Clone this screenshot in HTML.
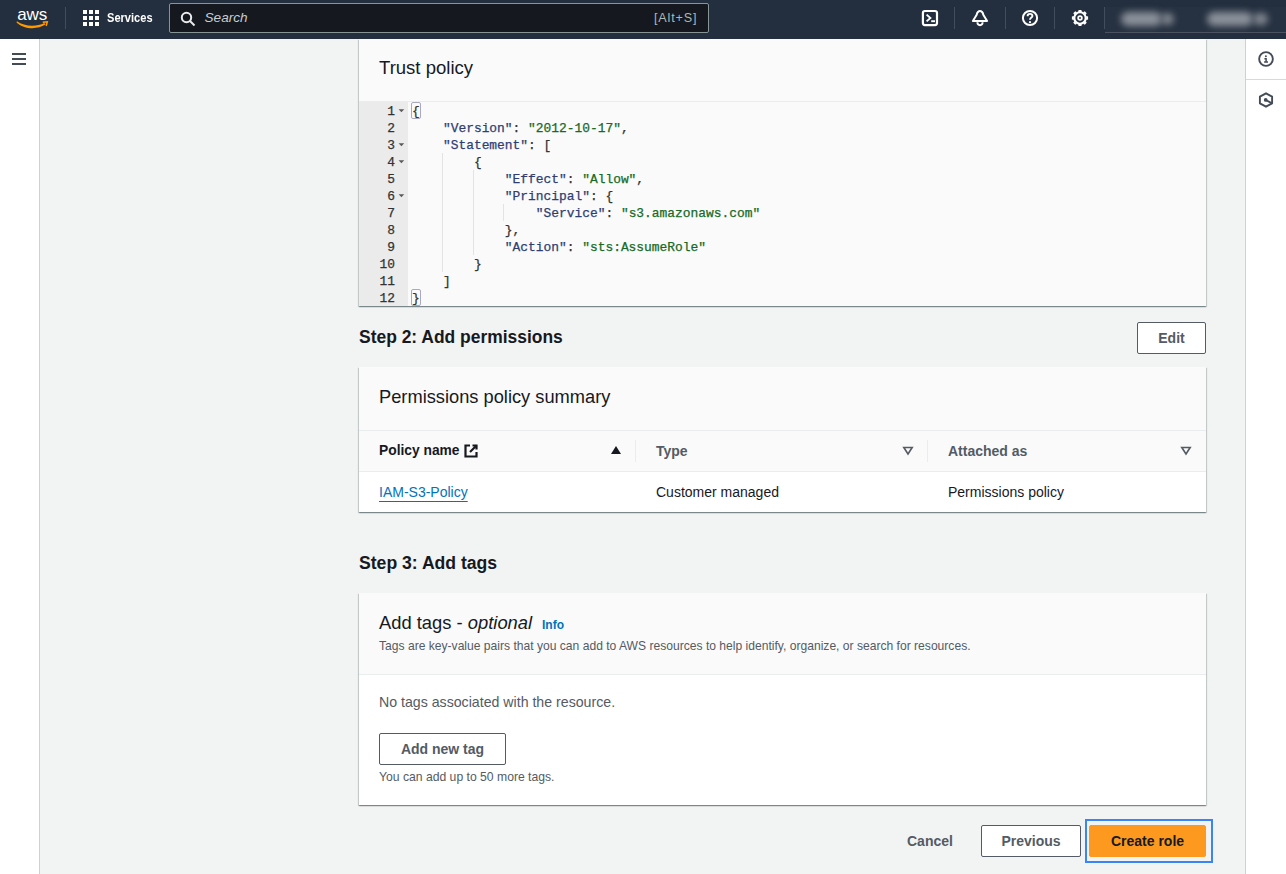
<!DOCTYPE html>
<html><head><meta charset="utf-8">
<style>
*{box-sizing:border-box;margin:0;padding:0}
html,body{width:1286px;height:874px;overflow:hidden;background:#f2f3f3;font-family:"Liberation Sans",sans-serif;color:#16191f}
.abs{position:absolute}
#nav{position:absolute;left:0;top:0;width:1286px;height:39px;background:#232f3e}
#side{position:absolute;left:0;top:39px;width:40px;height:835px;background:#fff;border-right:1px solid #ccd2d2}
#tools{position:absolute;left:1245px;top:39px;width:41px;height:835px;background:#fff;border-left:1px solid #ccd2d2}
.card{position:absolute;left:359px;width:847px;background:#fff;box-shadow:0 1px 1px 0 rgba(0,28,36,.3),1px 1px 1px 0 rgba(0,28,36,.15),-1px 1px 1px 0 rgba(0,28,36,.15)}
.hd{position:absolute;left:0;top:0;width:100%;background:#fafafa;border-bottom:1px solid #eaeded}
.t{position:absolute;white-space:nowrap;line-height:1}
.h2{font-size:18px;font-weight:400;color:#16191f}
.h1{font-size:18px;font-weight:700;color:#16191f}
.btn{position:absolute;border:1px solid #545b64;border-radius:2px;background:#fff;color:#545b64;font-weight:700;font-size:14px;text-align:center}
.mono{font-family:"Liberation Mono",monospace;font-size:12.9px;-webkit-text-stroke:0.25px currentColor}
.ln{position:absolute;left:0;width:36px;padding-top:1px;text-align:right;color:#333;height:18px;line-height:17px}
.cl{position:absolute;left:53px;padding-top:1px;height:18px;line-height:17px;white-space:pre;color:#333}
.k{color:#2f3e72}.v{color:#176a25}
</style></head><body>
<div id="nav">
  <!-- aws logo -->
  <div class="t" style="left:17.300px;top:5.900px;font-size:17px;color:#fff;letter-spacing:-0.2px">aws</div>
  <svg class="abs" style="left:14px;top:18px" width="40" height="12" viewBox="14 18 40 12"><path d="M17 21.200C24 26.300 36 27.200 44.400 22.900L45.400 24.600C37 30.100 23.500 29.200 16.500 22.400Z" fill="#f90"/><path d="M42.600 21.500L48.300 20.900L46.900 26.300L45.500 25.600L46.200 22.800L42.900 23Z" fill="#f90"/></svg>
  <div class="abs" style="left:65px;top:7px;width:1px;height:22px;background:#414d5c"></div>
  <svg class="abs" style="left:83px;top:10px" width="16" height="16" viewBox="0 0 16 16" fill="#fff"><rect x="0" y="0" width="4" height="4"/><rect x="6" y="0" width="4" height="4"/><rect x="12" y="0" width="4" height="4"/><rect x="0" y="6" width="4" height="4"/><rect x="6" y="6" width="4" height="4"/><rect x="12" y="6" width="4" height="4"/><rect x="0" y="12" width="4" height="4"/><rect x="6" y="12" width="4" height="4"/><rect x="12" y="12" width="4" height="4"/></svg>
  <div class="t" style="left:107px;top:11px;font-size:13.5px;color:#fff;font-weight:700;transform-origin:0 0;transform:scaleX(0.82)">Services</div>
  <div class="abs" style="left:169px;top:3px;width:540px;height:30px;background:#15191f;border:1px solid #879596;border-radius:2px"></div>
  <svg class="abs" style="left:179px;top:10px" width="18" height="18" viewBox="0 0 18 18"><circle cx="7.5" cy="7.5" r="4.7" stroke="#e9ebed" stroke-width="2" fill="none"/><path d="M11 11 L15.5 15.5" stroke="#e9ebed" stroke-width="2"/></svg>
  <div class="t" style="left:204.500px;top:11px;font-size:13.600px;color:#c6cdd3;font-style:italic">Search</div>
  <div class="t" style="left:654px;top:12px;font-size:12.600px;letter-spacing:0.850px;color:#aab7b8">[Alt+S]</div>

  <svg class="abs" style="left:900px;top:0" width="200" height="39" viewBox="900 0 200 39" fill="none" stroke="#fff">
    <rect x="922.9" y="11" width="14.1" height="14.1" rx="2" stroke-width="2.2"/>
    <path d="M926.6 14.6L930.4 18L926.6 21.4" stroke-width="1.9"/><path d="M931.2 21.2H935" stroke-width="1.9"/>
    <path d="M972.9 21L976.700 14.800C976.900 12.600 978.700 10.900 980 10.900C981.300 10.900 983.100 12.600 983.300 14.800L987.100 21Z" stroke-width="2" stroke-linejoin="round"/>
    <path d="M977.4 22.3A2.600 2.900 0 0 0 982.600 22.3" stroke-width="1.9"/>
    <circle cx="1030" cy="18" r="7.100" stroke-width="2"/>
    <path d="M1027.6 16.2C1027.6 14.600 1028.700 13.900 1030 13.900C1031.300 13.900 1032.400 14.700 1032.400 15.900C1032.400 17.500 1030 17.700 1030 19.800" stroke-width="1.9"/>
    <circle cx="1030" cy="22.200" r="1.100" fill="#fff" stroke="none"/>
    <circle cx="1080" cy="18" r="5.700" stroke-width="2.100"/>
    <g fill="#fff" stroke="none"><path d="M1078.1 11.900L1078.600 9.900H1081.400L1081.900 11.900Z" transform="rotate(0 1080 18)"/><path d="M1078.1 11.900L1078.600 9.900H1081.400L1081.900 11.900Z" transform="rotate(45 1080 18)"/><path d="M1078.1 11.900L1078.600 9.900H1081.400L1081.900 11.900Z" transform="rotate(90 1080 18)"/><path d="M1078.1 11.900L1078.600 9.900H1081.400L1081.900 11.900Z" transform="rotate(135 1080 18)"/><path d="M1078.1 11.900L1078.600 9.900H1081.400L1081.900 11.900Z" transform="rotate(180 1080 18)"/><path d="M1078.1 11.900L1078.600 9.900H1081.400L1081.900 11.900Z" transform="rotate(225 1080 18)"/><path d="M1078.1 11.900L1078.600 9.900H1081.400L1081.900 11.900Z" transform="rotate(270 1080 18)"/><path d="M1078.1 11.900L1078.600 9.900H1081.400L1081.900 11.900Z" transform="rotate(315 1080 18)"/></g>
    <circle cx="1080" cy="18" r="1.850" stroke-width="1.800"/>
  </svg>
  <div class="abs" style="left:954px;top:7px;width:1px;height:22px;background:#414d5c"></div>
  <div class="abs" style="left:1005px;top:7px;width:1px;height:22px;background:#414d5c"></div>
  <div class="abs" style="left:1054px;top:7px;width:1px;height:22px;background:#414d5c"></div>
  <div class="abs" style="left:1104px;top:7px;width:1px;height:22px;background:#414d5c"></div>
  <div class="abs" style="left:1105px;top:7px;width:181px;height:26px;background:#263141;border-bottom:1px solid #4a535f"></div>
  <div class="abs" style="left:1121px;top:12px;width:41px;height:14px;border-radius:7px;background:#8a9099;filter:blur(3.500px)"></div>
  <div class="abs" style="left:1161px;top:13px;width:13px;height:12px;border-radius:6px;background:#7f868f;filter:blur(3.500px)"></div>
  <div class="abs" style="left:1207px;top:12px;width:46px;height:14px;border-radius:7px;background:#8a9099;filter:blur(3.500px)"></div>
  <div class="abs" style="left:1253px;top:13px;width:15px;height:12px;border-radius:6px;background:#7f868f;filter:blur(3.500px)"></div>
</div>
<div id="side"></div>
<div id="tools"></div>

<!-- Trust policy card -->
<div class="card" style="top:39px;height:267px">
  <div class="hd" style="height:63px"></div>
  <div class="t h2" style="left:20px;top:20px;font-size:18.55px">Trust policy</div>
  <div class="abs mono" style="left:0;top:63px;width:847px;height:204px;background:#fafafa">
    <div class="abs" style="left:0;top:0;width:49px;height:204px;background:#ebebeb"></div>
    <div class="abs" style="left:0;top:0px;width:847px;height:204px">
    <div class="ln" style="top:0px">1</div>
    <svg class="abs" style="left:39px;top:7px" width="7" height="4" viewBox="0 0 7 4"><path d="M0.600 0.300H6.200L3.400 3.200Z" fill="#5a5a5a"/></svg>
    <div class="cl" style="top:0px">{</div>
    <div class="ln" style="top:17px">2</div>
    <div class="cl" style="top:17px">    <span class="k">"Version"</span>: <span class="v">"2012-10-17"</span>,</div>
    <div class="ln" style="top:34px">3</div>
    <svg class="abs" style="left:39px;top:41px" width="7" height="4" viewBox="0 0 7 4"><path d="M0.600 0.300H6.200L3.400 3.200Z" fill="#5a5a5a"/></svg>
    <div class="cl" style="top:34px">    <span class="k">"Statement"</span>: [</div>
    <div class="ln" style="top:51px">4</div>
    <svg class="abs" style="left:39px;top:58px" width="7" height="4" viewBox="0 0 7 4"><path d="M0.600 0.300H6.200L3.400 3.200Z" fill="#5a5a5a"/></svg>
    <div class="cl" style="top:51px">        {</div>
    <div class="ln" style="top:68px">5</div>
    <div class="cl" style="top:68px">            <span class="k">"Effect"</span>: <span class="v">"Allow"</span>,</div>
    <div class="ln" style="top:85px">6</div>
    <svg class="abs" style="left:39px;top:92px" width="7" height="4" viewBox="0 0 7 4"><path d="M0.600 0.300H6.200L3.400 3.200Z" fill="#5a5a5a"/></svg>
    <div class="cl" style="top:85px">            <span class="k">"Principal"</span>: {</div>
    <div class="ln" style="top:102px">7</div>
    <div class="cl" style="top:102px">                <span class="k">"Service"</span>: <span class="v">"s3.amazonaws.com"</span></div>
    <div class="ln" style="top:119px">8</div>
    <div class="cl" style="top:119px">            },</div>
    <div class="ln" style="top:136px">9</div>
    <div class="cl" style="top:136px">            <span class="k">"Action"</span>: <span class="v">"sts:AssumeRole"</span></div>
    <div class="ln" style="top:153px">10</div>
    <div class="cl" style="top:153px">        }</div>
    <div class="ln" style="top:170px">11</div>
    <div class="cl" style="top:170px">    ]</div>
    <div class="ln" style="top:187px">12</div>
    <div class="cl" style="top:187px">}</div>
    <div class="abs" style="left:83px;top:51px;width:1px;height:119px;background:#e3e3e3"></div>
    <div class="abs" style="left:114px;top:68px;width:1px;height:85px;background:#e3e3e3"></div>
    <div class="abs" style="left:144px;top:102px;width:1px;height:17px;background:#e3e3e3"></div>
    <div class="abs" style="left:52px;top:0px;width:10px;height:17px;border:1px solid #a9a9c4;border-radius:2px"></div>
    <div class="abs" style="left:52px;top:187px;width:10px;height:17px;border:1px solid #a9a9c4;border-radius:2px"></div>
    </div>
  </div>
</div>

<div class="t h1" style="left:359px;top:329px;font-size:17.45px">Step 2: Add permissions</div>
<div class="btn" style="left:1137px;top:322px;width:69px;height:32px;line-height:30px">Edit</div>

<div class="card" style="top:367px;height:145px">
  <div class="hd" style="height:64px"></div>
  <div class="t h2" style="left:20px;top:21px;font-size:18.27px">Permissions policy summary</div>
  <div class="abs" style="left:0;top:64px;width:847px;height:41px;background:#fafafa;border-bottom:1px solid #eaeded"></div>
  <div class="t" style="left:20px;top:76.600px;font-size:13.800px;font-weight:700;color:#16191f">Policy name</div>
  <svg class="abs" style="left:104px;top:76px" width="16" height="16" viewBox="0 0 16 16" fill="none" stroke="#16191f" stroke-width="2.200"><path d="M7 2.5H2.5V13.5H13.5V9"/><path d="M9.5 2.5H13.5V6.5"/><path d="M13.5 2.5L7 9"/></svg>
  <svg class="abs" style="left:251px;top:78px" width="12" height="10" viewBox="0 0 12 10"><path d="M6 1L11 9H1Z" fill="#16191f"/></svg>
  <div class="abs" style="left:276px;top:73px;width:1px;height:22px;background:#eaeded"></div>
  <div class="t" style="left:297px;top:77px;font-size:14px;font-weight:700;color:#545b64">Type</div>
  <svg class="abs" style="left:543px;top:79px" width="12" height="10" viewBox="0 0 12 10"><path d="M1.8 1.5H10.2L6 8Z" fill="none" stroke="#545b64" stroke-width="1.6" stroke-linejoin="miter"/></svg>
  <div class="abs" style="left:568px;top:73px;width:1px;height:22px;background:#eaeded"></div>
  <div class="t" style="left:589px;top:77px;font-size:14px;font-weight:700;color:#545b64">Attached as</div>
  <svg class="abs" style="left:821px;top:79px" width="12" height="10" viewBox="0 0 12 10"><path d="M1.8 1.5H10.2L6 8Z" fill="none" stroke="#545b64" stroke-width="1.6" stroke-linejoin="miter"/></svg>
  <div class="t" style="left:20px;top:118px;font-size:14px;color:#0073bb;text-decoration:underline;text-underline-offset:4px">IAM-S3-Policy</div>
  <div class="t" style="left:297px;top:118px;font-size:14px;color:#16191f">Customer managed</div>
  <div class="t" style="left:589px;top:118px;font-size:14px;color:#16191f">Permissions policy</div>

</div>

<div class="t h1" style="left:359px;top:555px;font-size:17.6px">Step 3: Add tags</div>

<div class="card" style="top:593px;height:212px">
  <div class="hd" style="height:82px"></div>
  <div class="t h2" style="left:20px;top:21px;font-size:18.36px">Add tags - <i>optional</i></div>
  <div class="t" style="left:183px;top:26px;font-size:12px;font-weight:700;color:#0073bb">Info</div>
  <div class="t" style="left:20px;top:47px;font-size:12.1px;color:#545b64">Tags are key-value pairs that you can add to AWS resources to help identify, organize, or search for resources.</div>
  <div class="t" style="left:20px;top:102px;font-size:14.17px;color:#545b64">No tags associated with the resource.</div>
  <div class="btn" style="left:20px;top:140px;width:127px;height:32px;line-height:30px">Add new tag</div>
  <div class="t" style="left:20px;top:178px;font-size:12.18px;color:#545b64">You can add up to 50 more tags.</div>

</div>


<div class="t" style="left:907px;top:834px;font-size:14px;font-weight:700;color:#545b64">Cancel</div>
<div class="btn" style="left:981px;top:825px;width:100px;height:32px;line-height:30px">Previous</div>
<div class="abs" style="left:1085px;top:819px;width:128px;height:44px;border:2px solid #3a84f7"></div>
<div class="btn" style="left:1089px;top:825px;width:117px;height:32px;line-height:30px;background:#fd991f;border-color:#fd991f;color:#16191f">Create role</div>

<svg class="abs" style="left:12px;top:53px" width="14" height="12" viewBox="0 0 14 12"><path d="M0 1H14M0 6H14M0 11H14" stroke="#434b57" stroke-width="2"/></svg>
<div class="abs" style="left:1246px;top:79px;width:40px;height:1px;background:#d5dbdb"></div>
<svg class="abs" style="left:1250px;top:44px" width="32" height="70" viewBox="1250 44 32 70" fill="none" stroke="#434b57">
<circle cx="1266" cy="59" r="6.850" stroke-width="1.900"/>
<circle cx="1265.900" cy="56.200" r="1" fill="#434b57" stroke="none"/>
<path d="M1264.400 58.700H1266.100V61.800M1264.100 61.900H1268" stroke-width="1.500"/>
<path d="M1266 93.300L1272.100 96.700V103.300L1266 106.700L1259.900 103.300V96.700Z" stroke-width="1.900" stroke-linejoin="round"/>
<circle cx="1265.700" cy="99.900" r="1.900" fill="#434b57" stroke="none"/>
<path d="M1265.800 100L1272 103.300" stroke-width="1.900"/>
</svg>
</body></html>
